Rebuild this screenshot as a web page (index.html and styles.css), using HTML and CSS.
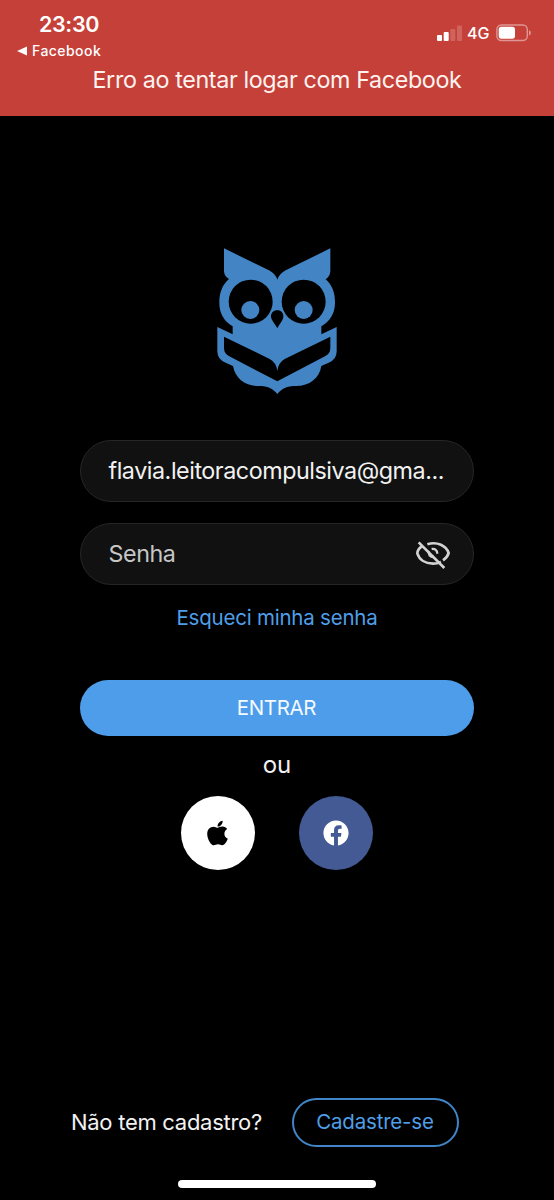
FILE: index.html
```
<!DOCTYPE html>
<html lang="pt-BR">
<head>
<meta charset="utf-8">
<meta name="viewport" content="width=device-width, initial-scale=1">
<title>Entrar</title>
<link rel="stylesheet" href="styles.css">
</head>
<body>
<div class="screen">
  <header class="banner">
    <div class="status">
      <div class="status-left">
        <span class="time">23:30</span>
        <span class="back"><svg class="back-arrow" viewBox="0 0 10 10"><path d="M0 5 10 0.4V9.6Z"/></svg><span class="back-label">Facebook</span></span>
      </div>
      <div class="status-right">
        <svg class="signal" viewBox="0 0 26 16"><rect x="0" y="10" width="5" height="6" rx="1"/><rect x="6.7" y="7" width="5" height="9" rx="1"/><g opacity=".18"><rect x="13.3" y="4" width="5" height="12" rx="1"/><rect x="20" y="0.5" width="5" height="15.5" rx="1"/></g></svg>
        <span class="network">4G</span>
        <svg class="battery" viewBox="0 0 36 18"><rect class="battery-case" x="0.9" y="1" width="30.4" height="15.5" rx="4.5"/><rect x="2.7" y="2.8" width="16.3" height="11.9" rx="2.6"/><path opacity=".45" d="M33 6.2c2.5.8 2.5 4.4 0 5.2z"/></svg>
      </div>
    </div>
    <p class="error"><span>Erro ao tentar logar com Facebook</span></p>
  </header>
  <main class="login">
    <svg class="owl" viewBox="0 0 420 480">
      <path class="blue" d="M51 25 186 91Q206 102 211 119Q216 102 236 91L370 25V94Q369 109 356 118C376 136 384 158 384 188C384 220 369 243 343 259V283L389 261V334Q389 359 365 368L343 378C337 415 308 438 267 438C239 438 225 446 211 462C197 446 183 438 155 438C113 438 85 415 78 378L56 368Q31 359 31 334V261L77 283V259C51 243 37 220 37 188C37 158 46 134 66 117Q52 109 51 94Z"/>
      <circle cx="131" cy="185" r="66"/><circle cx="290" cy="185" r="66"/>
      <circle class="blue" cx="130" cy="210" r="27"/><circle class="blue" cx="290" cy="210" r="27"/>
      <path d="M211 211c12 0 18 8 18 18 0 12-11 22-18 36-7-14-19-24-19-36 0-10 7-18 19-18Z"/>
      <path d="M51 290 188 357Q207 367 211 392Q215 367 233 357L370 290V324Q370 341 354 349L211 424 67 349Q51 341 51 324Z"/>
    </svg>
    <form class="form">
      <div class="field"><span class="email">flavia.leitoracompulsiva@gma...</span></div>
      <div class="field"><span class="placeholder">Senha</span>
        <svg class="eye" viewBox="0 0 138 138"><path d="M38 47C28 54 22 63 22 70C28 90 47 101 69 101C78 101 86 99 93 96M52 43C82 33 109 48 116 69C113 79 108 85 99 91M26 37 103 114"/><path class="pupil" d="M65 57C75 55 82 61 82 71M57 63C53 73 61 82 72 81"/></svg>
      </div>
      <a class="forgot"><span>Esqueci minha senha</span></a>
      <button class="submit" type="button">ENTRAR</button>
    </form>
    <p class="or">ou</p>
    <div class="social">
      <a class="round apple"><svg viewBox="0 0 384 512"><path d="M318.7 268.7c-.2-36.7 16.4-64.4 50-84.8-18.8-26.9-47.2-41.7-84.7-44.6-35.5-2.8-74.3 20.7-88.5 20.7-15 0-49.4-19.7-76.4-19.7C63.3 141.2 4 184.8 4 273.5q0 39.3 14.4 81.2c12.8 36.7 59 126.7 107.2 125.2 25.2-.6 43-17.9 75.8-17.9 31.8 0 48.3 17.9 76.4 17.9 48.6-.7 90.4-82.5 102.6-119.3-65.2-30.7-61.7-90-61.7-91.9zm-56.6-164.2c27.3-32.4 24.8-61.9 24-72.5-24.1 1.4-52 16.4-67.9 34.9-17.5 19.8-27.8 44.3-25.6 71.9 26.1 2 49.9-11.4 69.5-34.3z"/></svg></a>
      <a class="round facebook"><svg viewBox="0 0 512 512"><path d="M504 256C504 119 393 8 256 8S8 119 8 256c0 123.78 90.69 226.38 209.25 245V327.69h-63V256h63v-54.64c0-62.15 37-96.48 93.67-96.48 27.14 0 55.52 4.84 55.52 4.84v61h-31.28c-30.8 0-40.41 19.12-40.41 38.73V256h68.78l-11 71.69h-57.78V501C413.31 482.38 504 379.78 504 256z"/></svg></a>
    </div>
  </main>
  <footer class="footer">
    <div class="signup"><span class="question">Não tem cadastro?</span><a class="register">Cadastre-se</a></div>
    <div class="home"></div>
  </footer>
</div>
</body>
</html>
```
FILE: styles.css
```
* { box-sizing: border-box; }
body { margin: 0; background: #000; }
p { margin: 0; }
.screen {
  width: 554px; height: 1200px; display: flex; flex-direction: column;
  background: #000; color: #f2f2f2; overflow: hidden;
  font-family: Inter, "Liberation Sans", sans-serif; white-space: nowrap;
}
.banner { height: 116px; background: #c54039; color: #fff; fill: #fff; }
.status { height: 66px; display: flex; justify-content: space-between; }
.status-left { display: flex; flex-direction: column; padding: 10px 0 0 17px; }
.time { padding-left: 22px; font-size: 21.5px; line-height: 28px; font-weight: 600; letter-spacing: -.35px; }
.back { display: flex; align-items: center; gap: 5px; height: 25px; font-size: 14px; font-weight: 500; letter-spacing: .45px; }
.back-arrow { width: 10px; height: 10px; }
.status-right { display: flex; align-items: center; height: 66px; padding-right: 22px; }
.signal { width: 26px; height: 16px; margin-right: 4px; margin-left: -1px; }
.network { width: 29px; font-size: 16px; font-weight: 500; line-height: 20px; }
.battery { width: 36px; height: 18px; }
.battery-case { fill: none; stroke: #fff; stroke-opacity: .45; stroke-width: 1.4; }
.error { font-size: 23.3px; line-height: 28px; text-align: center; color: #fff3f0; letter-spacing: -.37px; }
.login { flex: 1; display: flex; flex-direction: column; align-items: center; padding-top: 124px; }
.owl { width: 140px; height: 160px; fill: #000; }
.blue { fill: #4385c4; }
.form { width: 394px; margin-top: 40px; display: flex; flex-direction: column; }
.field {
  height: 62px; margin-bottom: 20.5px; padding: 0 17px 1px 27.5px; border: 1.5px solid #262626; border-radius: 31px;
  background: #111; display: flex; align-items: center; justify-content: space-between; font-size: 23.3px; letter-spacing: -.45px;
}
.placeholder { color: #c6c6c6; }
.eye { width: 46px; height: 46px; fill: none; stroke: #d2d2d2; stroke-width: 8; }
.pupil { stroke-width: 7; }
.forgot { margin-top: -1px; color: #4f9fe8; font-size: 20.5px; line-height: 28px; text-align: center; letter-spacing: -.22px; }
.submit {
  height: 56px; margin-top: 48px; padding: 0 1px 2px 0; border: 0; border-radius: 28px; letter-spacing: -.35px;
  background: #4d9dea; color: #f4faff; font: 400 20.5px Inter, "Liberation Sans", sans-serif;
}
.or { margin-top: 14px; font-size: 24px; line-height: 30px; }
.social { display: flex; gap: 44px; margin-top: 16px; }
.round { width: 74px; height: 74px; border-radius: 50%; display: flex; align-items: center; justify-content: center; }
.apple { background: #fff; }
.apple svg { width: 21px; height: 28px; fill: #000; margin-right: 1px; }
.facebook { background: #435a94; }
.facebook svg { width: 26px; height: 26px; fill: #fff; margin-right: 1px; }
.footer { height: 102px; display: flex; flex-direction: column; justify-content: space-between; }
.signup { display: flex; align-items: center; height: 49px; padding-left: 71px; }
.question { width: 220.5px; padding-bottom: 2px; font-size: 22px; letter-spacing: -.28px; }
.register {
  width: 167px; height: 49px; padding-bottom: 2px; border: 2px solid #4185c8; border-radius: 25px; color: #4f9fe8;
  display: flex; align-items: center; justify-content: center; font-size: 20.5px; letter-spacing: -.2px;
}
.home { width: 198px; height: 8px; margin: 0 0 12px 178px; border-radius: 4px; background: #fff; }
```
